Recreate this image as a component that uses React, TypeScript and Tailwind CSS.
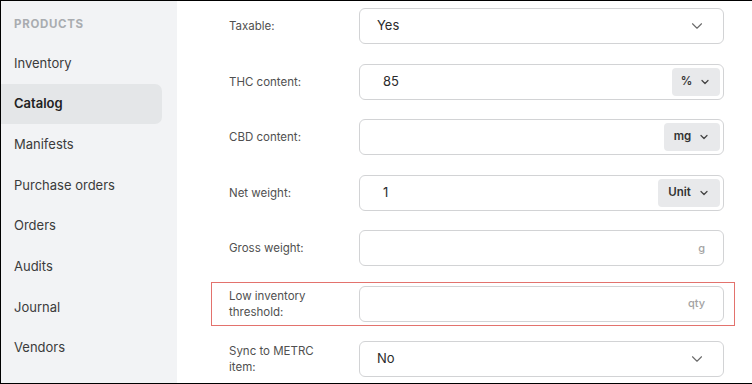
import { ChevronDown } from 'lucide-react';

const NAV = ['Inventory', 'Catalog', 'Manifests', 'Purchase orders', 'Orders', 'Audits', 'Journal', 'Vendors'];

type Field =
  | { label: string; kind: 'select'; value: string }
  | { label: string; kind: 'unit'; value: string; unit: string; unitW: string }
  | { label: string; kind: 'suffix'; suffix: string; highlight?: boolean };

const FIELDS: Field[] = [
  { label: 'Taxable:', kind: 'select', value: 'Yes' },
  { label: 'THC content:', kind: 'unit', value: '85', unit: '%', unitW: 'w-[48px]' },
  { label: 'CBD content:', kind: 'unit', value: '', unit: 'mg', unitW: 'w-[56px]' },
  { label: 'Net weight:', kind: 'unit', value: '1', unit: 'Unit', unitW: 'w-[62px]' },
  { label: 'Gross weight:', kind: 'suffix', suffix: 'g' },
  { label: 'Low inventory threshold:', kind: 'suffix', suffix: 'qty', highlight: true },
  { label: 'Sync to METRC item:', kind: 'select', value: 'No' },
];

function FieldInput({ field }: { field: Field }) {
  const base = 'flex h-[36px] w-[365px] items-center rounded-[6px] border border-[#d2d3d5] bg-white';
  if (field.kind === 'select') {
    return (
      <div className={`${base} justify-between pl-[17px] pr-[17px]`}>
        <span className="text-[13px] text-[#2b2b2b]">{field.value}</span>
        <ChevronDown className="h-[18px] w-[18px] text-[#6b6b6b]" strokeWidth={1.5} />
      </div>
    );
  }
  if (field.kind === 'unit') {
    return (
      <div className={`${base} justify-between pl-[23px] pr-[3px]`}>
        <span className="text-[13px] text-[#2b2b2b]">{field.value}</span>
        <div
          className={`flex h-[28px] ${field.unitW} items-center justify-center gap-[7px] rounded-[4px] bg-[#e8e9eb] text-[11.5px] font-semibold text-[#333]`}
        >
          <span>{field.unit}</span>
          <ChevronDown className="h-[12px] w-[12px] text-[#444]" strokeWidth={2.5} />
        </div>
      </div>
    );
  }
  return (
    <div className={`${base} justify-end pr-[18px]`}>
      <span className="text-[11px] font-medium text-[#a3a3a3]">{field.suffix}</span>
    </div>
  );
}

export default function App() {
  return (
    <div
      className="flex h-[384px] w-[752px] overflow-hidden border-y border-l border-black bg-white"
      style={{ fontFamily: 'Inter, "Noto Sans", sans-serif' }}
    >
      <aside className="flex w-[176px] shrink-0 flex-col bg-[#f2f3f5]">
        <div className="flex h-[42px] items-center pl-[13px] pt-[5px] text-[11.5px] font-bold tracking-[0.06em] text-[#a9acb0]">
          PRODUCTS
        </div>
        {NAV.map((n) => (
          <div
            key={n}
            className={`flex h-[40.7px] w-[161px] items-center rounded-r-[7px] pl-[13px] text-[13px] ${
              n === 'Catalog' ? 'bg-[#e4e6e8] font-semibold text-[#222]' : 'text-[#3b3b3b]'
            }`}
          >
            {n}
          </div>
        ))}
      </aside>
      <main className="flex flex-1 flex-col gap-[11.5px] pl-[34px] pt-[3px]">
        {FIELDS.map((f) => (
          <div
            key={f.label}
            className={`flex h-[44px] w-[524px] items-center pl-[17px] ${
              f.kind === 'suffix' && f.highlight ? 'border border-[#e3726d]' : 'border border-transparent'
            }`}
          >
            <div className="w-[130px] shrink-0 pr-[30px] text-[11.5px] leading-[16px] text-[#505050]">{f.label}</div>
            <FieldInput field={f} />
          </div>
        ))}
      </main>
    </div>
  );
}
